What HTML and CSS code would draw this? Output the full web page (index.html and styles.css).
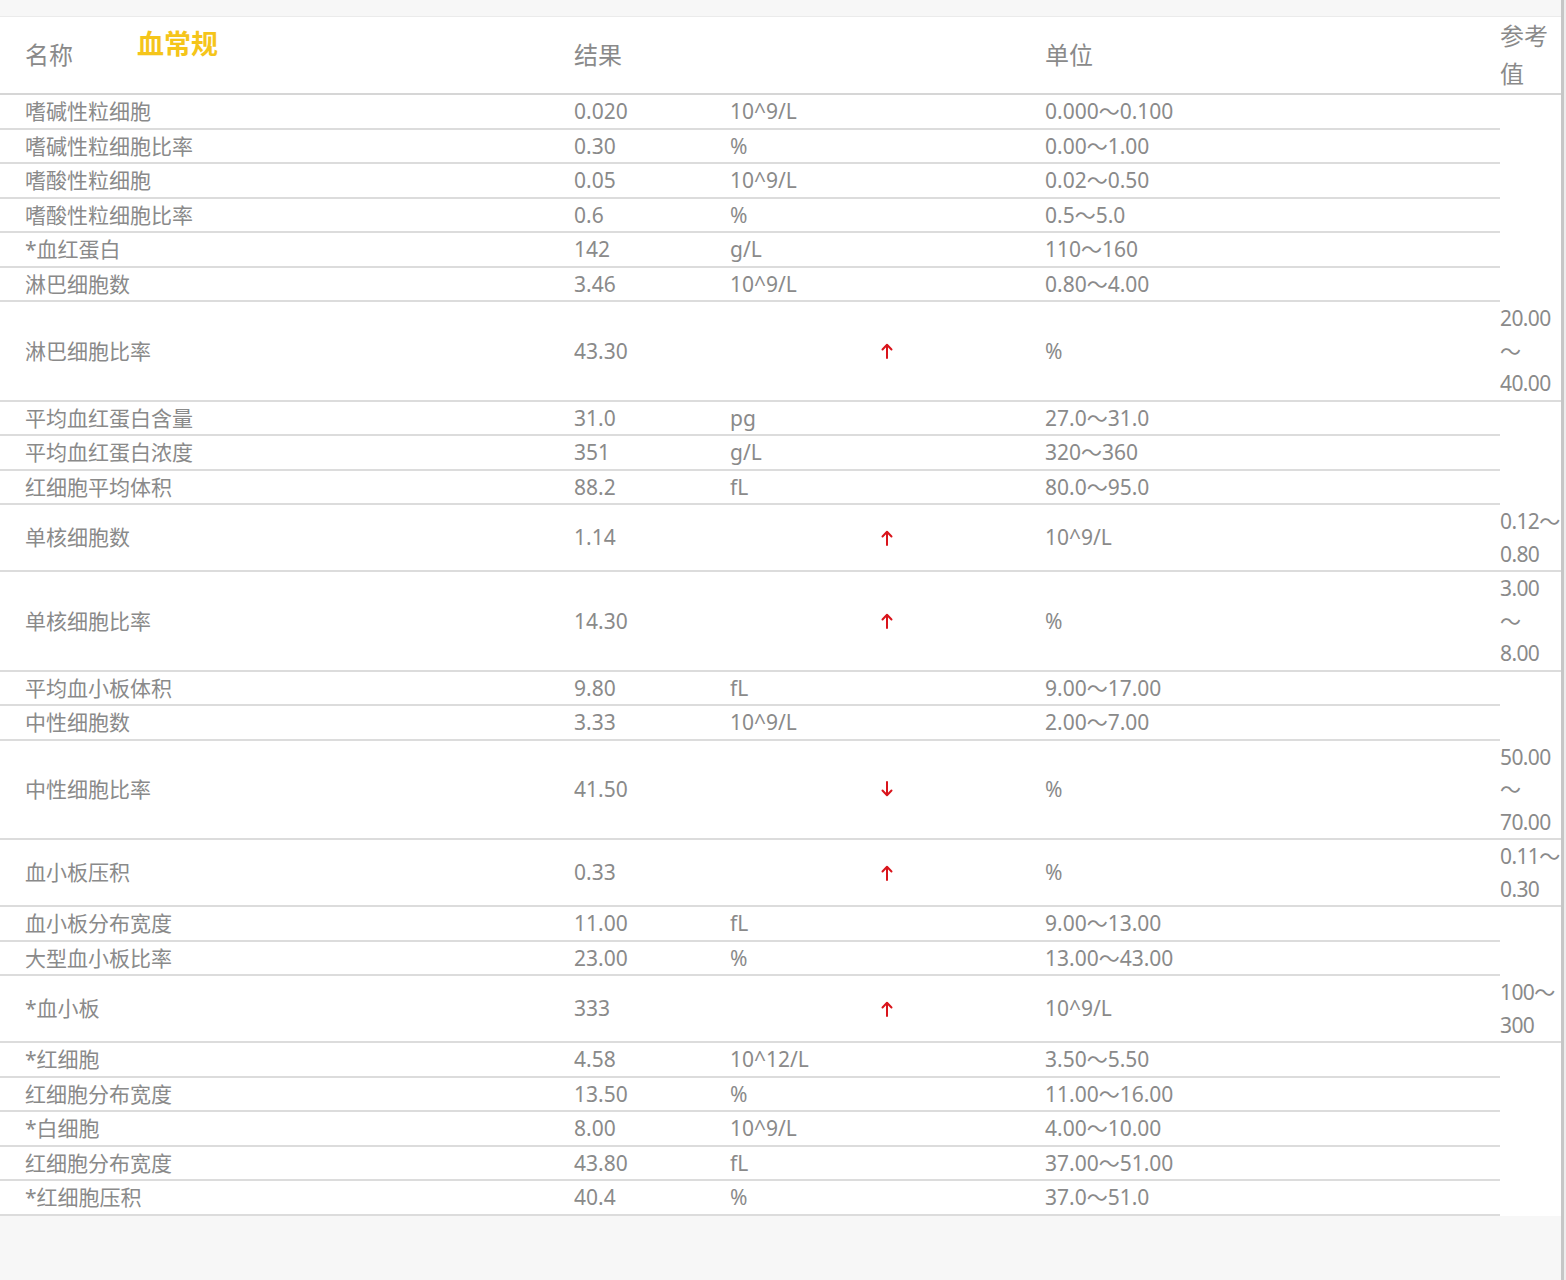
FILE: index.html
```html
<!DOCTYPE html>
<html lang="zh-CN">
<head>
<meta charset="utf-8">
<title>血常规</title>
<link rel="stylesheet" href="styles.css">
</head>
<body>
<div class="screen">
  <main class="main">
    <div class="topbar"></div>
    <table class="report">
      <colgroup>
        <col class="c-name">
        <col class="c-result">
        <col class="c-unit">
        <col class="c-flag">
        <col class="c-range">
        <col class="c-ref">
      </colgroup>
      <thead>
        <tr>
          <th class="name-h">名称<span class="title">血常规</span></th>
          <th colspan="3">结果</th>
          <th>单位</th>
          <th class="ref-h">参考<br>值</th>
        </tr>
      </thead>
      <tbody>
        <tr><td class="name">嗜碱性粒细胞</td><td>0.020</td><td>10^9/L</td><td></td><td>0.000～0.100</td><td class="empty"></td></tr>
        <tr><td class="name">嗜碱性粒细胞比率</td><td>0.30</td><td>%</td><td></td><td>0.00～1.00</td><td class="empty"></td></tr>
        <tr><td class="name">嗜酸性粒细胞</td><td>0.05</td><td>10^9/L</td><td></td><td>0.02～0.50</td><td class="empty"></td></tr>
        <tr><td class="name">嗜酸性粒细胞比率</td><td>0.6</td><td>%</td><td></td><td>0.5～5.0</td><td class="empty"></td></tr>
        <tr><td class="name">*血红蛋白</td><td>142</td><td>g/L</td><td></td><td>110～160</td><td class="empty"></td></tr>
        <tr><td class="name">淋巴细胞数</td><td>3.46</td><td>10^9/L</td><td></td><td>0.80～4.00</td><td class="empty"></td></tr>
        <tr><td class="name">淋巴细胞比率</td><td>43.30</td><td></td><td class="flag"><svg class="arrow" viewBox="0 0 12 16"><path d="M6 15V2M1.5 6.5L6 1.8l4.5 4.7"/></svg></td><td>%</td><td class="ref">20.00<br>～<br>40.00</td></tr>
        <tr><td class="name">平均血红蛋白含量</td><td>31.0</td><td>pg</td><td></td><td>27.0～31.0</td><td class="empty"></td></tr>
        <tr><td class="name">平均血红蛋白浓度</td><td>351</td><td>g/L</td><td></td><td>320～360</td><td class="empty"></td></tr>
        <tr><td class="name">红细胞平均体积</td><td>88.2</td><td>fL</td><td></td><td>80.0～95.0</td><td class="empty"></td></tr>
        <tr><td class="name">单核细胞数</td><td>1.14</td><td></td><td class="flag"><svg class="arrow" viewBox="0 0 12 16"><path d="M6 15V2M1.5 6.5L6 1.8l4.5 4.7"/></svg></td><td>10^9/L</td><td class="ref">0.12～<br>0.80</td></tr>
        <tr><td class="name">单核细胞比率</td><td>14.30</td><td></td><td class="flag"><svg class="arrow" viewBox="0 0 12 16"><path d="M6 15V2M1.5 6.5L6 1.8l4.5 4.7"/></svg></td><td>%</td><td class="ref">3.00<br>～<br>8.00</td></tr>
        <tr><td class="name">平均血小板体积</td><td>9.80</td><td>fL</td><td></td><td>9.00～17.00</td><td class="empty"></td></tr>
        <tr><td class="name">中性细胞数</td><td>3.33</td><td>10^9/L</td><td></td><td>2.00～7.00</td><td class="empty"></td></tr>
        <tr><td class="name">中性细胞比率</td><td>41.50</td><td></td><td class="flag"><svg class="arrow" viewBox="0 0 12 16"><path d="M6 1v13M1.5 9.5L6 14.2l4.5-4.7"/></svg></td><td>%</td><td class="ref">50.00<br>～<br>70.00</td></tr>
        <tr><td class="name">血小板压积</td><td>0.33</td><td></td><td class="flag"><svg class="arrow" viewBox="0 0 12 16"><path d="M6 15V2M1.5 6.5L6 1.8l4.5 4.7"/></svg></td><td>%</td><td class="ref">0.11～<br>0.30</td></tr>
        <tr><td class="name">血小板分布宽度</td><td>11.00</td><td>fL</td><td></td><td>9.00～13.00</td><td class="empty"></td></tr>
        <tr><td class="name">大型血小板比率</td><td>23.00</td><td>%</td><td></td><td>13.00～43.00</td><td class="empty"></td></tr>
        <tr><td class="name">*血小板</td><td>333</td><td></td><td class="flag"><svg class="arrow" viewBox="0 0 12 16"><path d="M6 15V2M1.5 6.5L6 1.8l4.5 4.7"/></svg></td><td>10^9/L</td><td class="ref">100～<br>300</td></tr>
        <tr><td class="name">*红细胞</td><td>4.58</td><td>10^12/L</td><td></td><td>3.50～5.50</td><td class="empty"></td></tr>
        <tr><td class="name">红细胞分布宽度</td><td>13.50</td><td>%</td><td></td><td>11.00～16.00</td><td class="empty"></td></tr>
        <tr><td class="name">*白细胞</td><td>8.00</td><td>10^9/L</td><td></td><td>4.00～10.00</td><td class="empty"></td></tr>
        <tr><td class="name">红细胞分布宽度</td><td>43.80</td><td>fL</td><td></td><td>37.00～51.00</td><td class="empty"></td></tr>
        <tr><td class="name">*红细胞压积</td><td>40.4</td><td>%</td><td></td><td>37.0～51.0</td><td class="empty"></td></tr>
      </tbody>
    </table>
  </main>
  <div class="edge"></div>
</div>
</body>
</html>
```

FILE: styles.css
```css
html, body {
  margin: 0;
  padding: 0;
}

body {
  background: #f7f7f7;
  font-family: "Noto Sans", "Noto Sans CJK SC", sans-serif;
  color: #8a8a8a;
}

.screen {
  display: flex;
  width: 1566px;
  height: 1280px;
  overflow: hidden;
}

.main {
  width: 1561px;
  flex: none;
  background: #f7f7f7;
}

.topbar {
  height: 16px;
  border-bottom: 1px solid #ebebeb;
}

.edge {
  flex: 1;
  border-left: 3px solid #c6c6c6;
  background: #ededed;
}

.report {
  width: 1561px;
  table-layout: fixed;
  border-collapse: separate;
  border-spacing: 0;
  background: #fff;
}

.c-name { width: 574px; }
.c-result { width: 156px; }
.c-unit { width: 151px; }
.c-flag { width: 164px; }
.c-range { width: 455px; }
.c-ref { width: 61px; }

.report th {
  padding: 0;
  text-align: left;
  font-weight: 400;
  font-size: 24px;
  line-height: 38px;
  vertical-align: middle;
  border-bottom: 2px solid #d6d6d6;
  white-space: nowrap;
}

.report th.name-h {
  padding-left: 25px;
  position: relative;
}

.title {
  position: absolute;
  left: 137px;
  top: 10px;
  font-size: 27px;
  line-height: 34px;
  font-weight: 600;
  color: #f5c51a;
}

.report td {
  padding: 0;
  font-size: 21px;
  line-height: 32.5px;
  vertical-align: middle;
  border-bottom: 2px solid #dcdcdc;
  white-space: nowrap;
}

.report td.name {
  padding-left: 25px;
}

.report td.empty {
  border-bottom: none;
}

.report td.ref {
  line-height: 32.5px;
  letter-spacing: -0.6px;
}

.report td.flag {
  line-height: 0;
}

.arrow {
  display: block;
  width: 12px;
  height: 16px;
  fill: none;
  stroke: #d9141b;
  stroke-width: 2;
  stroke-linecap: round;
  stroke-linejoin: round;
}
```
